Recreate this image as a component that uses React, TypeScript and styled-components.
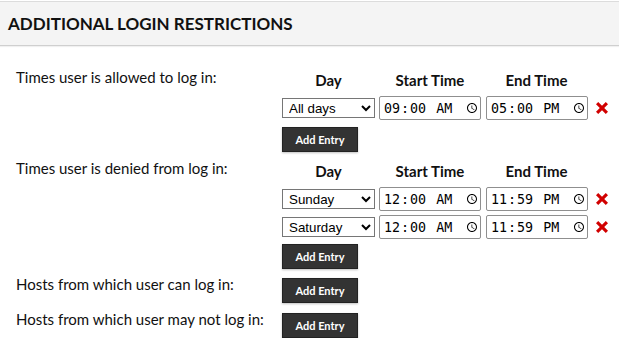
import React from "react";
import styled, { createGlobalStyle } from "styled-components";

const Global = createGlobalStyle`
  html, body { margin: 0; padding: 0; background: #fff; }
  body { font-family: Lato, "Open Sans", sans-serif; color: #111; }
`;

const Page = styled.div`
  width: 619px;
  padding-top: 1px;
`;

const Header = styled.div`
  height: 43px;
  background: #f4f4f4;
  border-top: 1px solid #dcdcdc;
  border-bottom: 1px solid #cfcfcf;
  box-shadow: 0 1px 1px rgba(0, 0, 0, 0.06);
  display: flex;
  align-items: center;
  padding-left: 8px;
  font-size: 17px;
  font-weight: 700;
  color: #111;
`;

const Body = styled.div`
  padding: 14px 0 0 16px;
  display: flex;
  flex-direction: column;
`;

const Section = styled.div<{ $top: number }>`
  display: flex;
  margin-top: ${(p) => p.$top}px;
`;

const Label = styled.div`
  width: 266px;
  flex: none;
  font-size: 15px;
  line-height: 20px;
`;

const Controls = styled.div`
  display: flex;
  flex-direction: column;
`;

const ColHeads = styled.div`
  display: flex;
  gap: 4px;
  margin-top: 3px;
  margin-bottom: 6px;
  font-size: 15px;
  font-weight: 700;
  line-height: 20px;
`;

const ColHead = styled.div<{ $w: number }>`
  width: ${(p) => p.$w}px;
  text-align: center;
`;

const Row = styled.div`
  display: flex;
  align-items: center;
  gap: 4px;
  margin-bottom: 4px;
`;

const DaySelect = styled.select`
  width: 93px;
  height: 20px;
  box-sizing: border-box;
  font-family: "Liberation Sans", Arial, sans-serif;
  font-size: 13.33px;
  border: 1px solid #767676;
  border-radius: 0;
  background: #fff;
  color: #000;
  padding: 0 0 0 2px;
`;

const TimeInput = styled.input`
  width: 102px;
  height: 24px;
  box-sizing: border-box;
  font-family: "DejaVu Sans Mono", monospace;
  font-size: 13.33px;
  border: 1px solid #8f8f8f;
  border-radius: 2px;
  padding: 1px 2px 1px 3px;
  color: #000;
  background: #fff;
  &::-webkit-datetime-edit {
    padding: 0;
  }
  &::-webkit-calendar-picker-indicator {
    margin-left: 10px;
    padding: 0;
    width: 12px;
    height: 12px;
  }
`;

const Remove = styled.button`
  border: 0;
  background: none;
  padding: 0;
  margin-left: 1px;
  width: 17px;
  height: 17px;
  display: flex;
  align-items: center;
  justify-content: center;
  cursor: pointer;
`;

const AddButton = styled.button<{ $top: number }>`
  margin-top: ${(p) => p.$top}px;
  width: 76px;
  height: 25px;
  background: #333;
  color: #fff;
  border: 1px solid #222;
  box-shadow: 0 1px 2px rgba(0, 0, 0, 0.25);
  font-family: Lato, "Open Sans", sans-serif;
  font-weight: 700;
  font-size: 11px;
  padding: 0;
  cursor: pointer;
`;

const XIcon = () => (
  <svg width="16" height="16" viewBox="0 0 16 16">
    <path
      d="M2 4.2 4.2 2 8 5.8 11.8 2 14 4.2 10.2 8 14 11.8 11.8 14 8 10.2 4.2 14 2 11.8 5.8 8Z"
      fill="#d10000"
    />
  </svg>
);

const days = ["All days", "Sunday", "Monday", "Tuesday", "Wednesday", "Thursday", "Friday", "Saturday"];

const EntryRow = ({ day, start, end }: { day: string; start: string; end: string }) => (
  <Row>
    <DaySelect defaultValue={day}>
      {days.map((d) => (
        <option key={d}>{d}</option>
      ))}
    </DaySelect>
    <TimeInput type="time" defaultValue={start} />
    <TimeInput type="time" defaultValue={end} style={{ marginLeft: 1 }} />
    <Remove aria-label="Remove">
      <XIcon />
    </Remove>
  </Row>
);

const Heads = () => (
  <ColHeads>
    <ColHead $w={93}>Day</ColHead>
    <ColHead $w={102}>Start Time</ColHead>
    <ColHead $w={103}>End Time</ColHead>
  </ColHeads>
);

export default function App() {
  return (
    <Page>
      <Global />
      <Header>ADDITIONAL LOGIN RESTRICTIONS</Header>
      <Body>
        <Section $top={7}>
          <Label>Times user is allowed to log in:</Label>
          <Controls>
            <Heads />
            <EntryRow day="All days" start="09:00" end="17:00" />
            <AddButton $top={3}>Add Entry</AddButton>
          </Controls>
        </Section>
        <Section $top={6}>
          <Label>Times user is denied from log in:</Label>
          <Controls>
            <Heads />
            <EntryRow day="Sunday" start="00:00" end="23:59" />
            <EntryRow day="Saturday" start="00:00" end="23:59" />
            <AddButton $top={1}>Add Entry</AddButton>
          </Controls>
        </Section>
        <Section $top={5}>
          <Label>Hosts from which user can log in:</Label>
          <Controls>
            <AddButton $top={4}>Add Entry</AddButton>
          </Controls>
        </Section>
        <Section $top={6}>
          <Label>Hosts from which user may not log in:</Label>
          <Controls>
            <AddButton $top={4}>Add Entry</AddButton>
          </Controls>
        </Section>
      </Body>
    </Page>
  );
}
